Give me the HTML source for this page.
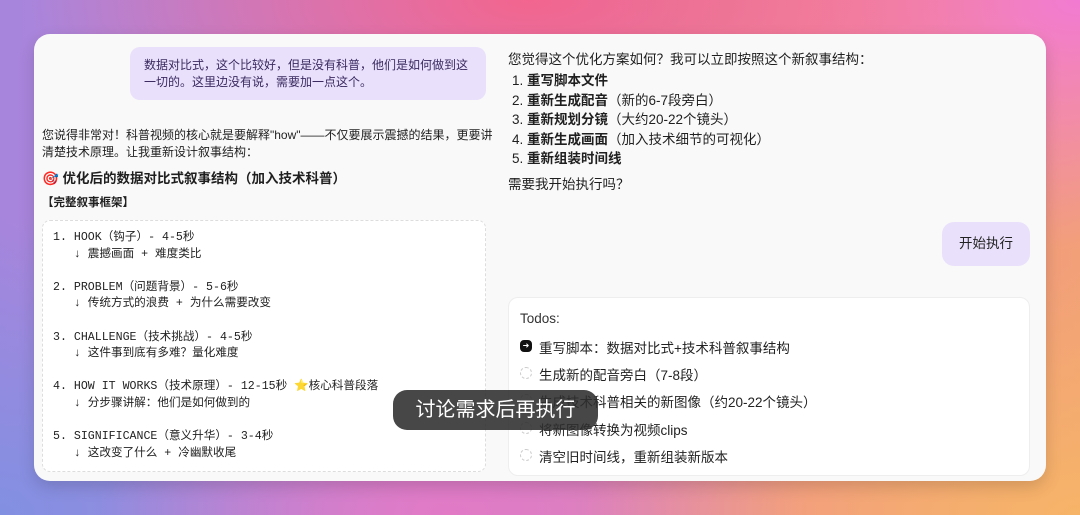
<!DOCTYPE html>
<html><head><meta charset="utf-8"><style>
*{margin:0;padding:0;box-sizing:border-box}
body{width:1080px;height:515px;overflow:hidden;position:relative;font-family:"Liberation Sans","Noto Sans CJK SC",sans-serif;
background:
radial-gradient(ellipse 500px 200px at 530px 0px,#f2658f 0%,rgba(242,101,143,0) 100%),
radial-gradient(ellipse 400px 250px at 1080px 0px,#f27ad2 0%,rgba(242,122,210,0) 100%),
radial-gradient(ellipse 500px 250px at 1080px 515px,#f6b468 0%,rgba(246,180,104,0) 100%),
radial-gradient(ellipse 350px 200px at 450px 515px,#e27ac6 0%,rgba(226,122,198,0) 100%),
radial-gradient(ellipse 400px 300px at 0px 515px,#8290e2 0%,rgba(130,144,226,0) 100%),
linear-gradient(90deg,#a785dc 0%,#c484d0 40%,#f0908c 75%,#f2a078 100%);}
.card{position:absolute;left:34px;top:34px;width:1012px;height:447px;background:#f9f9f9;border-radius:16px;box-shadow:0 6px 16px rgba(0,0,0,.15);overflow:hidden}
.a{position:absolute;white-space:nowrap;color:#1f1f1f}
.bub{position:absolute;left:96px;top:13px;width:356px;height:53px;background:#e9e0fb;border-radius:10px;padding:10px 14px;font-size:12px;line-height:16.5px;color:#3a2a60}
.code{position:absolute;left:8px;top:186px;width:444px;height:252px;border:1px dashed #ddd;border-radius:8px;background:#fff;padding:9px 0 0 10px;font-family:"Liberation Mono","Noto Sans CJK SC",monospace;font-size:11.6px;line-height:16.6px;white-space:pre;color:#222}
.btn{position:absolute;left:908px;top:188px;width:88px;height:44px;background:#e9e0fb;border-radius:12px;font-size:13.5px;text-align:center;line-height:44px;color:#222}
.todo{position:absolute;left:474px;top:263px;width:522px;height:179px;background:#fff;border-radius:10px;border:1px solid #eee}
.t{position:absolute;left:30px;font-size:13.5px;color:#222;white-space:nowrap}
.c{position:absolute;left:11px;width:12px;height:12px;border-radius:50%;border:1px dashed #ccc}
.cap{position:absolute;left:393px;top:390px;width:205px;height:40px;background:rgba(45,45,45,.88);border-radius:14px;color:#fff;font-size:20px;text-align:center;line-height:40px}
</style></head><body>
<div class="card">
<div class="bub">数据对比式，这个比较好，但是没有科普，他们是如何做到这<br>一切的。这里边没有说，需要加一点这个。</div>
<div class="a" style="left:8px;top:93px;font-size:12px;line-height:17px">您说得非常对！科普视频的核心就是要解释"how"——不仅要展示震撼的结果，更要讲<br>清楚技术原理。让我重新设计叙事结构：</div>
<div class="a" style="left:8px;top:133px;font-size:13.5px;font-weight:bold">🎯 优化后的数据对比式叙事结构（加入技术科普）</div>
<div class="a" style="left:8px;top:160px;font-size:11.5px;font-weight:bold">【完整叙事框架】</div>
<div class="code">1. HOOK（钩子）- 4-5秒
   ↓ 震撼画面 + 难度类比

2. PROBLEM（问题背景）- 5-6秒
   ↓ 传统方式的浪费 + 为什么需要改变

3. CHALLENGE（技术挑战）- 4-5秒
   ↓ 这件事到底有多难？量化难度

4. HOW IT WORKS（技术原理）- 12-15秒 ⭐核心科普段落
   ↓ 分步骤讲解：他们是如何做到的

5. SIGNIFICANCE（意义升华）- 3-4秒
   ↓ 这改变了什么 + 冷幽默收尾</div>
<div class="a" style="left:474px;top:14px;font-size:13.5px">您觉得这个优化方案如何？我可以立即按照这个新叙事结构：</div>
<div class="a" style="left:478px;top:37px;font-size:13.5px;line-height:19.5px">1. <b>重写脚本文件</b><br>2. <b>重新生成配音</b>（新的6-7段旁白）<br>3. <b>重新规划分镜</b>（大约20-22个镜头）<br>4. <b>重新生成画面</b>（加入技术细节的可视化）<br>5. <b>重新组装时间线</b></div>
<div class="a" style="left:474px;top:139px;font-size:13.5px">需要我开始执行吗？</div>
<div class="btn">开始执行</div>
<div class="todo">
<div class="t" style="left:11px;top:13px;color:#333">Todos:</div>
<div class="c" style="top:42px;background:#111;border:1px solid #111;border-radius:4px;color:#fff;font-size:8px;line-height:10px;text-align:center">➜</div>
<div class="t" style="top:39px">重写脚本：数据对比式+技术科普叙事结构</div>
<div class="c" style="top:69px"></div><div class="t" style="top:66px">生成新的配音旁白（7-8段）</div>
<div class="c" style="top:96px"></div><div class="t" style="top:93px">生成技术科普相关的新图像（约20-22个镜头）</div>
<div class="c" style="top:124px"></div><div class="t" style="top:121px">将新图像转换为视频clips</div>
<div class="c" style="top:151px"></div><div class="t" style="top:148px">清空旧时间线，重新组装新版本</div>
</div>
</div>
<div class="cap">讨论需求后再执行</div>
</body></html>
